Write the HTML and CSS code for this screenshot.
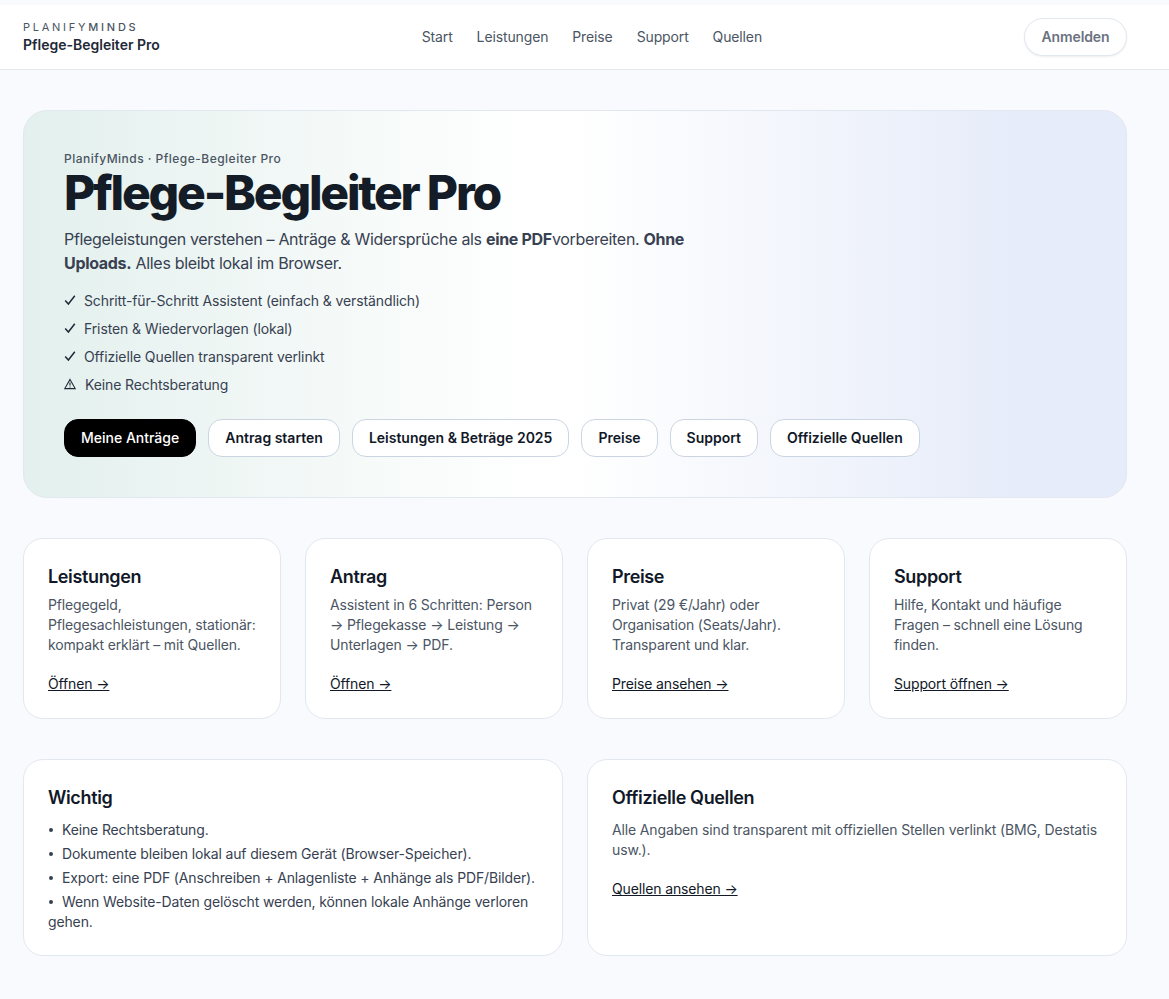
FILE: index.html
```html
<!DOCTYPE html>
<html lang="de">
<head>
    <meta charset="UTF-8">
    <meta name="viewport" content="width=device-width, initial-scale=1.0">
    <title>Pflege-Begleiter Pro</title>
    <link rel="stylesheet" href="styles.css">
</head>
<body>

    <header id="topbar">
        <div class="brand">
            <div class="brand-top">PLANIFY<span class="brand-strong">MINDS</span></div>
            <div class="brand-name">Pflege-Begleiter Pro</div>
        </div>
        <nav class="nav">
            <a href="#">Start</a>
            <a href="#">Leistungen</a>
            <a href="#">Preise</a>
            <a href="#">Support</a>
            <a href="#">Quellen</a>
        </nav>
        <a class="login" href="#">Anmelden</a>
    </header>

    <main id="container">

        <section class="hero">
            <div class="hero-kicker">PlanifyMinds · Pflege-Begleiter Pro</div>
            <h1>Pflege-Begleiter Pro</h1>
            <p class="hero-lead">Pflegeleistungen verstehen – Anträge &amp; Widersprüche als <b>eine PDF</b>vorbereiten. <b>Ohne Uploads.</b> Alles bleibt lokal im Browser.</p>
            <ul class="hero-list">
                <li>
                    <svg class="ico" viewBox="0 0 12 12"><path d="M1.2 6.4 4.4 10 10.8 1.8"/></svg>
                    <span>Schritt-für-Schritt Assistent (einfach &amp; verständlich)</span>
                </li>
                <li>
                    <svg class="ico" viewBox="0 0 12 12"><path d="M1.2 6.4 4.4 10 10.8 1.8"/></svg>
                    <span>Fristen &amp; Wiedervorlagen (lokal)</span>
                </li>
                <li>
                    <svg class="ico" viewBox="0 0 12 12"><path d="M1.2 6.4 4.4 10 10.8 1.8"/></svg>
                    <span>Offizielle Quellen transparent verlinkt</span>
                </li>
                <li class="warn">
                    <svg class="ico" viewBox="0 0 12 12"><path d="M6 1.4 11.2 10.6H.8Z"/><path d="M6 4.6V7.6M6 8.4V9.4"/></svg>
                    <span>Keine Rechtsberatung</span>
                </li>
            </ul>
            <div class="hero-buttons">
                <a class="btn btn-dark" href="#">Meine Anträge</a>
                <a class="btn" href="#">Antrag starten</a>
                <a class="btn" href="#">Leistungen &amp; Beträge 2025</a>
                <a class="btn" href="#">Preise</a>
                <a class="btn" href="#">Support</a>
                <a class="btn" href="#">Offizielle Quellen</a>
            </div>
        </section>

        <section class="grid-four">
            <div class="card">
                <h3>Leistungen</h3>
                <p>Pflegegeld, Pflegesachleistungen, stationär: kompakt erklärt – mit Quellen.</p>
                <a class="card-link" href="#">Öffnen →</a>
            </div>
            <div class="card">
                <h3>Antrag</h3>
                <p>Assistent in 6 Schritten: Person → Pflegekasse → Leistung → Unterlagen → PDF.</p>
                <a class="card-link" href="#">Öffnen →</a>
            </div>
            <div class="card">
                <h3>Preise</h3>
                <p>Privat (29 €/Jahr) oder Organisation (Seats/Jahr). Transparent und klar.</p>
                <a class="card-link" href="#">Preise ansehen →</a>
            </div>
            <div class="card">
                <h3>Support</h3>
                <p>Hilfe, Kontakt und häufige Fragen – schnell eine Lösung finden.</p>
                <a class="card-link" href="#">Support öffnen →</a>
            </div>
        </section>

        <section class="grid-two">
            <div class="card">
                <h3>Wichtig</h3>
                <ul class="notes">
                    <li>Keine Rechtsberatung.</li>
                    <li>Dokumente bleiben lokal auf diesem Gerät (Browser-Speicher).</li>
                    <li>Export: eine PDF (Anschreiben + Anlagenliste + Anhänge als PDF/Bilder).</li>
                    <li>Wenn Website-Daten gelöscht werden, können lokale Anhänge verloren gehen.</li>
                </ul>
            </div>
            <div class="card">
                <h3>Offizielle Quellen</h3>
                <p class="card-text-wide">Alle Angaben sind transparent mit offiziellen Stellen verlinkt (BMG, Destatis usw.).</p>
                <a class="card-link" href="#">Quellen ansehen →</a>
            </div>
        </section>

    </main>

</body>
</html>
```

FILE: styles.css
```css
*{
    margin: 0;
    padding: 0;
    box-sizing: border-box;
}

body{
    font-family: Inter, "Liberation Sans", sans-serif;
    background-color: #f8fafd;
    color: #111827;
    padding-top: 5px;
}

a{
    color: inherit;
    text-decoration: none;
}


/* TOPBAR */

#topbar{
    display: flex;
    justify-content: space-between;
    align-items: center;
    height: 65px;
    padding: 0 42px 0 23px;
    background-color: #fff;
    border-bottom: 1px solid #e5e7eb;
}

.brand-top{
    font-size: 11px;
    line-height: 16px;
    letter-spacing: 2.75px;
    color: #4b5563;
}
.brand-strong{
    font-weight: 500;
}
.brand-name{
    font-size: 14px;
    line-height: 20px;
    font-weight: 600;
    color: #1f2937;
}

.nav{
    display: flex;
    gap: 24px;
    margin-top: -2px;
    font-size: 14px;
    letter-spacing: -.13px;
    color: #4b5563;
}

.login{
    padding: 9px 16.5px;
    font-size: 14px;
    line-height: 18px;
    font-weight: 600;
    letter-spacing: -.1px;
    color: #6b7280;
    background-color: #fff;
    border: 1px solid #e2e8f0;
    border-radius: 19px;
    box-shadow: 0 1px 2px rgba(15, 23, 42, .08);
}


/* PAGE */

#container{
    padding: 40px 42px 41px 23px;
}


/* HERO */

.hero{
    height: 388px;
    padding: 40px;
    border: 1px solid #e2e8f0;
    border-radius: 24px;
    background: linear-gradient(90deg, #e3f0ed 0%, #fff 46%, #fff 50%, #e6ecf9 90%);
}

.hero-kicker{
    font-size: 12px;
    line-height: 16px;
    font-weight: 500;
    letter-spacing: .48px;
    color: #4b5563;
}

.hero h1{
    margin-top: 2px;
    font-size: 48px;
    line-height: 48px;
    font-weight: 800;
    letter-spacing: -2.2px;
    color: #141c27;
}

.hero-lead{
    width: 640px;
    margin-top: 10px;
    font-size: 16px;
    line-height: 24px;
    letter-spacing: -.31px;
    color: #374151;
}

.hero-list{
    list-style: none;
    margin-top: 11px;
    font-size: 14px;
    letter-spacing: -.11px;
    color: #374151;
}
.hero-list li{
    display: flex;
    align-items: center;
    gap: 8px;
    height: 28px;
}
.hero-list .warn{
    gap: 9px;
}

.ico{
    width: 12px;
    height: 12px;
    fill: none;
    stroke: #1f2937;
    stroke-width: 1.5;
}
.warn .ico{
    stroke-width: 1.1;
}

.hero-buttons{
    display: flex;
    gap: 12px;
    margin-top: 21px;
}

.btn{
    padding: 9px 16px;
    font-size: 14px;
    line-height: 18px;
    font-weight: 600;
    color: #111827;
    background-color: #fff;
    border: 1px solid #cbd5e1;
    border-radius: 14px;
}
.btn-dark{
    font-weight: 500;
    color: #fff;
    background-color: #000;
    border-color: #000;
}


/* CARDS */

.grid-four{
    display: grid;
    grid-template-columns: repeat(4, 1fr);
    gap: 24px;
    margin-top: 40px;
}

.grid-two{
    display: grid;
    grid-template-columns: repeat(2, 1fr);
    gap: 24px;
    margin-top: 40px;
}

.card{
    padding: 24px;
    background-color: #fff;
    border: 1px solid #e2e8f0;
    border-radius: 20px;
}

.card h3{
    font-size: 18px;
    line-height: 28px;
    font-weight: 600;
    letter-spacing: -.36px;
    color: #111827;
}

.card p{
    margin-top: 4px;
    font-size: 14px;
    line-height: 20px;
    letter-spacing: -.14px;
    color: #4b5563;
}
.card .card-text-wide{
    margin-top: 8px;
}

.card-link{
    display: inline-block;
    margin-top: 19px;
    font-size: 14px;
    line-height: 20px;
    letter-spacing: -.14px;
    color: #111827;
    text-decoration: underline;
}

.notes{
    list-style: none;
    margin-top: 8px;
    font-size: 14px;
    line-height: 20px;
    letter-spacing: -.14px;
    color: #374151;
}
.notes li{
    margin-bottom: 4px;
}
.notes li:last-child{
    margin-bottom: -1px;
}
.notes li::before{
    content: "";
    display: inline-block;
    width: 4px;
    height: 4px;
    margin: 0 9px 3px 1px;
    border-radius: 50%;
    background-color: #374151;
}
```
